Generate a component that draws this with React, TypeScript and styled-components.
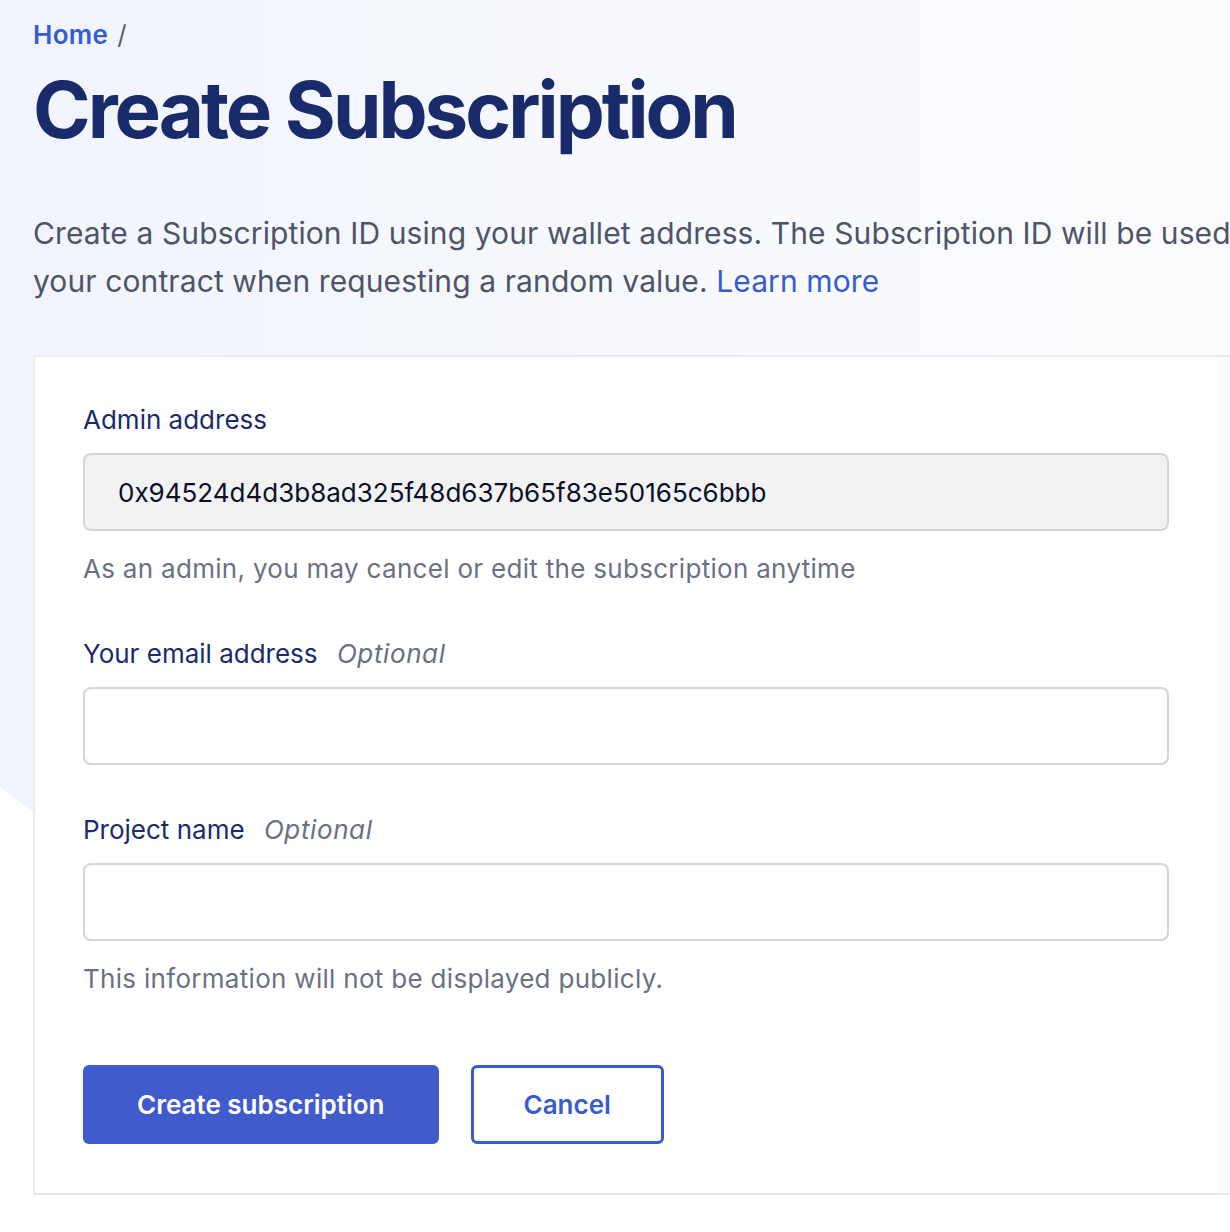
import React from "react";
import styled, { createGlobalStyle } from "styled-components";

const GlobalStyle = createGlobalStyle`
  html, body {
    margin: 0;
    padding: 0;
    background: #ffffff;
    overflow: hidden;
  }
  body {
    font-family: "Inter", "Liberation Sans", sans-serif;
    -webkit-font-smoothing: antialiased;
  }
  * {
    box-sizing: border-box;
  }
`;

const navy = "#1a2b6b";
const blue = "#375bd2";

export default function App() {
  return (
    <>
      <GlobalStyle />
      <Page>
        <HeroBackdrop />
        <Hero>
          <Breadcrumb>
            <Crumb href="#">Home</Crumb>
            <Slash>/</Slash>
          </Breadcrumb>
          <Title>Create Subscription</Title>
          <Intro>
            Create a Subscription ID using your wallet address. The Subscription
            ID will be used
            <br />
            your contract when requesting a random value.{" "}
            <IntroLink href="#">Learn more</IntroLink>
          </Intro>
        </Hero>
        <Card>
          <Form>
            <Field>
              <Label>Admin address</Label>
              <Input readOnly disabled value="0x94524d4d3b8ad325f48d637b65f83e50165c6bbb" />
              <Help>As an admin, you may cancel or edit the subscription anytime</Help>
            </Field>
            <Field>
              <Label>
                Your email address <Optional>Optional</Optional>
              </Label>
              <Input />
            </Field>
            <Field>
              <Label>
                Project name <Optional>Optional</Optional>
              </Label>
              <Input />
              <Help>This information will not be displayed publicly.</Help>
            </Field>
            <Actions>
              <PrimaryButton type="button">Create subscription</PrimaryButton>
              <OutlineButton type="button">Cancel</OutlineButton>
            </Actions>
          </Form>
          <Aside />
        </Card>
      </Page>
    </>
  );
}

const Page = styled.div`
  position: relative;
  width: 1230px;
  min-height: 1232px;
  overflow: hidden;
  padding: 0 0 0 33px;
`;

const HeroBackdrop = styled.div`
  position: absolute;
  inset: 0;
  z-index: 0;
  background: linear-gradient(90deg, #f1f4fc 0%, #f6f8fd 45%, #fcfcfe 100%);
  clip-path: polygon(0 0, 100% 0, 100% 360px, 40px 817px, 0 787px);
`;

const Hero = styled.header`
  position: relative;
  z-index: 1;
  padding-top: 17px;
`;

const Breadcrumb = styled.nav`
  display: flex;
  align-items: center;
  gap: 9px;
  font-size: 26px;
  line-height: 36px;
  font-weight: 600;
`;

const Crumb = styled.a`
  color: ${blue};
  text-decoration: none;
  letter-spacing: 0.3px;
`;

const Slash = styled.span`
  color: #5b6072;
  font-weight: 400;
`;

const Title = styled.h1`
  margin: 7px 0 0;
  font-size: 78px;
  line-height: 100px;
  font-weight: 700;
  color: ${navy};
  letter-spacing: -3px;
`;

const Intro = styled.p`
  margin: 49px 0 0;
  font-size: 30px;
  line-height: 48px;
  color: #4e5468;
  white-space: nowrap;
  letter-spacing: 0.1px;
`;

const IntroLink = styled.a`
  color: ${blue};
  text-decoration: none;
`;

const Card = styled.section`
  position: relative;
  z-index: 1;
  margin-top: 50px;
  width: 1400px;
  display: grid;
  grid-template-columns: 1183px 1fr;
  background: #ffffff;
  border-top: 2px solid #ececf0;
  border-left: 2px solid #ececf0;
  border-bottom: 2px solid #e6e6ea;
`;

const Form = styled.div`
  display: flex;
  flex-direction: column;
  gap: 47px;
  padding: 45px 49px 49px 48px;
`;

const Aside = styled.div`
  background: #fafafa;
`;

const Field = styled.div`
  display: flex;
  flex-direction: column;
`;

const Label = styled.label`
  font-size: 26px;
  line-height: 36px;
  color: ${navy};
  margin-bottom: 15px;
`;

const Optional = styled.em`
  margin-left: 12px;
  color: #6b7083;
  font-style: italic;
  letter-spacing: 0.6px;
`;

const Input = styled.input`
  height: 78px;
  width: 100%;
  padding: 0 33px;
  border: 2px solid #d4d4d9;
  border-radius: 8px;
  background: #ffffff;
  font-family: inherit;
  font-size: 26px;
  color: #0b1029;
  outline: none;

  &:disabled {
    background: #f2f2f2;
    color: #0b1029;
    -webkit-text-fill-color: #0b1029;
    opacity: 1;
  }
`;

const Help = styled.p`
  margin: 20px 0 2px;
  font-size: 26px;
  line-height: 36px;
  color: #6b7083;
  letter-spacing: 0.3px;
`;

const Actions = styled.div`
  display: flex;
  gap: 32px;
  margin-top: 19px;
`;

const ButtonBase = styled.button`
  height: 79px;
  border-radius: 6px;
  font-family: inherit;
  font-size: 26px;
  font-weight: 600;
  cursor: pointer;
`;

const PrimaryButton = styled(ButtonBase)`
  padding: 0 54px;
  background: #3f5bcc;
  border: none;
  color: #ffffff;
`;

const OutlineButton = styled(ButtonBase)`
  padding: 0 50px;
  background: #ffffff;
  border: 3px solid ${blue};
  color: ${blue};
`;
